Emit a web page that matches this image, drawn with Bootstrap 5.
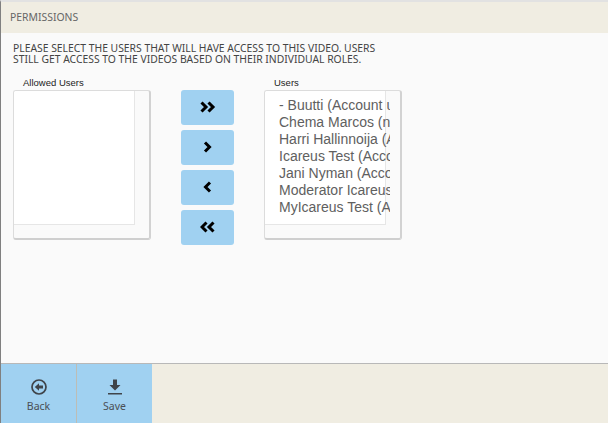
<!DOCTYPE html>
<html lang="en">
<head>
<meta charset="utf-8">
<title>Permissions</title>
<link rel="stylesheet" href="https://cdn.jsdelivr.net/npm/bootstrap@5.3.0/dist/css/bootstrap.min.css">
<style>
html,body{height:100%;overflow:hidden}
body{background:#fafafa;font-family:"Noto Sans",sans-serif}
.shell{height:423px;border-left:1px solid #808080;border-top:2px solid #e2e2e2}
.head-bar{height:31px;background:#f0ede2;color:#666;font-size:10.4px;padding-left:9px}
.intro{margin:10px 0 0 12px;width:378px;font-size:10.35px;line-height:11px;color:#444}
.work{padding:0 0 0 12px;margin-top:12px}
.pick{width:138px}
.pick-label{font:9.5px/12px "Liberation Sans",sans-serif;color:#222;height:13px;padding-left:10px}
.pick-box{height:150px;background:#fafafa;border:1px solid #dcdcdc;border-bottom:2px solid #cfcfcf;border-right:2px solid #d2d2d2;border-radius:3px;overflow:hidden}
.pick-clip{width:125px;height:134px;overflow:hidden}
.pick-view{width:121px;height:134px;background:#fff;border-right:1px solid #e6e6e6;border-bottom:1px solid #e6e6e6;padding:6px 0 0 14px;font:14px/17px "Liberation Sans",sans-serif;color:#606060;white-space:nowrap}
.movers{width:53px;margin:13px 30px 0 30px;gap:5px}
.mover{height:35px;width:53px;padding:0 0 2px;border:0;border-radius:3px;background:#a0d1f1;color:#000}
.foot{height:60px;background:#f0ede2;border-top:1px solid #b8b8b8}
.foot-btn{width:76px;background:#a0d1f1;border:0;border-right:1px solid #bdbdb5;border-radius:0;padding:14px 0 0;color:#4a4f55;font-size:10.5px;line-height:13px}
.foot-btn+.foot-btn{width:75px;border-right:0}
</style>
</head>
<body>
<div class="shell d-flex flex-column">
  <div class="head-bar d-flex align-items-center">PERMISSIONS</div>
  <div class="flex-grow-1">
    <p class="intro">PLEASE SELECT THE USERS THAT WILL HAVE ACCESS TO THIS VIDEO. USERS STILL GET ACCESS TO THE VIDEOS BASED ON THEIR INDIVIDUAL ROLES.</p>
    <div class="work d-flex align-items-start">
      <div class="pick">
        <div class="pick-label">Allowed Users</div>
        <div class="pick-box"><div class="pick-clip"><div class="pick-view"></div></div></div>
      </div>
      <div class="movers d-flex flex-column">
        <button class="mover btn d-flex align-items-center justify-content-center" aria-label="Add all"><svg width="16" height="12" viewBox="0 0 16 12"><path d="M1.500 1.500 6 6 1.500 10.500M8.500 1.500 13 6 8.500 10.500" fill="none" stroke="#000" stroke-width="3"/></svg></button>
        <button class="mover btn d-flex align-items-center justify-content-center" aria-label="Add"><svg width="10" height="12" viewBox="0 0 10 12"><path d="M2 1.500 6.500 6 2 10.500" fill="none" stroke="#000" stroke-width="3"/></svg></button>
        <button class="mover btn d-flex align-items-center justify-content-center" aria-label="Remove"><svg width="10" height="12" viewBox="0 0 10 12"><path d="M7 1.500 2.500 6 7 10.500" fill="none" stroke="#000" stroke-width="3"/></svg></button>
        <button class="mover btn d-flex align-items-center justify-content-center" aria-label="Remove all"><svg width="16" height="12" viewBox="0 0 16 12"><path d="M6.500 1.500 2 6 6.500 10.500M13.500 1.500 9 6 13.500 10.500" fill="none" stroke="#000" stroke-width="3"/></svg></button>
      </div>
      <div class="pick">
        <div class="pick-label">Users</div>
        <div class="pick-box"><div class="pick-clip"><div class="pick-view">
          <div>- Buutti (Account user)</div>
          <div>Chema Marcos (normal)</div>
          <div>Harri Hallinnoija (Admin)</div>
          <div>Icareus Test (Account)</div>
          <div>Jani Nyman (Account)</div>
          <div>Moderator Icareus (Mod)</div>
          <div>MyIcareus Test (Admin)</div>
        </div></div></div>
      </div>
    </div>
  </div>
  <div class="foot d-flex align-items-stretch">
    <button class="foot-btn btn d-flex flex-column align-items-center">
      <svg width="18" height="18" viewBox="0 0 18 18" class="mb-1"><circle cx="9" cy="9" r="7" fill="none" stroke="#3f444a" stroke-width="1.700"/><path d="M4.800 9 9 5.300V7.400H13V10.600H9V12.700Z" fill="#3f444a"/></svg>
      Back
    </button>
    <button class="foot-btn btn d-flex flex-column align-items-center">
      <svg width="18" height="18" viewBox="0 0 18 18" class="mb-1"><path d="M7 1.500H11V7H14.500L9 12.500 3.500 7H7ZM2 15H16V16.600H2Z" fill="#3f444a"/></svg>
      Save
    </button>
  </div>
</div>
<script src="https://cdn.jsdelivr.net/npm/bootstrap@5.3.0/dist/js/bootstrap.bundle.min.js"></script>
</body>
</html>
